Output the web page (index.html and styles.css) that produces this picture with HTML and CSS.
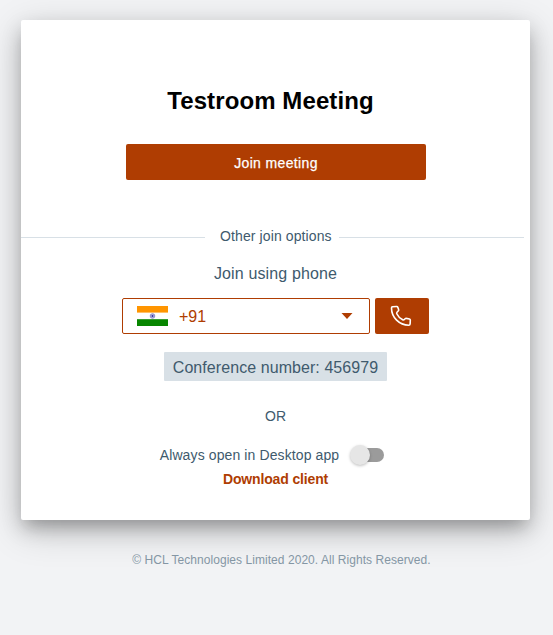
FILE: index.html
```html
<!DOCTYPE html>
<html lang="en">
<head>
<meta charset="utf-8">
<title>Testroom Meeting</title>
<link rel="stylesheet" href="styles.css">
</head>
<body>
<main class="card">
  <h1 class="title"><span>Testroom Meeting</span></h1>
  <button class="join">Join meeting</button>
  <div class="divider"><span class="divider-label">Other join options</span></div>
  <p class="subtitle"><span>Join using phone</span></p>
  <div class="phone">
    <div class="country">
      <svg class="flag" viewBox="0 0 31 20" width="31" height="20">
        <path fill="#fff" d="M0 0h31v20H0z"/>
        <path fill="#ff9500" d="M0 0h31v6.6H0z"/>
        <path fill="#078600" d="M0 13.2h31V20H0z"/>
        <circle cx="15.5" cy="10" r="2.3" fill="#b5b5df" stroke="#7c7cc4" stroke-width=".8"/>
        <circle cx="15.5" cy="10" r=".9" fill="#30309c"/>
      </svg>
      <span class="code">+91</span>
      <svg class="caret" viewBox="0 0 12 6" width="12" height="6"><path fill="#af3d02" d="M.5 0h11L6 6z"/></svg>
    </div>
    <button class="call" aria-label="Call">
      <svg viewBox="0 0 22 22" width="22" height="22"><path fill="none" stroke="#fff" stroke-width="1.6" stroke-linejoin="round" d="M2.5 1.8 6.5 1.5Q7.6 1.4 7.9 2.4L8.6 4.6Q8.8 5.4 8.2 6L7 7.2Q6.4 7.9 6.8 8.8C8 11.5 10.2 13.5 12.7 14.8Q13.5 15.2 14.2 14.7L15.1 13.8Q15.7 13.2 16.5 13.4L19.4 14Q20.4 14.3 20.3 15.2L20.1 19Q20 20.2 18.8 20.2C9.3 20.2 1.5 12.5 1.5 3Q1.5 1.9 2.5 1.8Z"/></svg>
    </button>
  </div>
  <p class="conference"><span>Conference number: 456979</span></p>
  <p class="or">OR</p>
  <div class="desktop">
    <span class="desktop-label">Always open in Desktop app</span>
    <span class="switch"><span class="knob"></span></span>
  </div>
  <a class="download">Download client</a>
</main>
<footer class="footer"><span>© HCL Technologies Limited 2020. All Rights Reserved.</span></footer>
</body>
</html>
```
FILE: styles.css
```css
* { box-sizing: border-box; }
body {
  margin: 0;
  padding: 20px 23px 0 21px;
  height: 635px;
  overflow: hidden;
  background: #f2f3f5;
  color: #405a6d;
  font: 14px/20px "Liberation Sans", Arial, sans-serif;
  white-space: nowrap;
}
h1, p { margin: 0; }
button { border: 0; padding: 0; font: inherit; color: #fff; background: #af3d02; border-radius: 2px; }
svg { display: block; }
.card {
  display: flex;
  flex-direction: column;
  align-items: center;
  height: 500px;
  padding-top: 66px;
  background: #fff;
  border-radius: 2px;
  box-shadow: 0 10px 14px -6px rgba(0, 0, 0, .15), 0 10px 38px 0 rgba(0, 0, 0, .2), 0 9px 20px 0 rgba(0, 0, 0, .17);
}
.title {
  margin-right: 10px;
  color: #000;
  font-size: 24px;
  line-height: 30px;
  letter-spacing: .1px;
}
.join {
  width: 300px;
  height: 36px;
  margin: 28px 0 0 1px;
  padding-top: 1px;
  -webkit-text-stroke: .25px;
  letter-spacing: .36px;
}
.divider {
  display: flex;
  align-items: center;
  align-self: stretch;
  height: 20px;
  margin: 47px 6px 0 0;
}
.divider::before, .divider::after {
  content: "";
  height: 1px;
  margin-top: 1px;
  background: #d8e0e6;
}
.divider::before { width: 184px; }
.divider::after { flex: 1; }
.divider-label { width: 134px; padding: 0 0 2px 15px; letter-spacing: .11px; }
.subtitle { margin-top: 16px; font-size: 16px; line-height: 22px; letter-spacing: .13px; }
.phone { display: flex; gap: 4.5px; margin: 13px .5px 0 0; }
.country {
  display: flex;
  align-items: center;
  width: 248px;
  height: 36px;
  padding: 0 16px 0 14px;
  border: 1px solid #af3d02;
  border-radius: 2px;
  color: #af3d02;
  font-size: 16px;
}
.code { margin-left: 11px; padding-top: 2px; }
.caret { margin-left: auto; }
.call { display: flex; align-items: center; justify-content: center; width: 54px; height: 36px; padding-right: 2px; }
.conference {
  width: 223px;
  height: 29px;
  margin-top: 18px;
  border-radius: 1px;
  background: #d8e0e6;
  font-size: 16px;
  line-height: 31px;
  letter-spacing: .07px;
  text-align: center;
}
.or { margin-top: 25px; }
.desktop { display: flex; align-items: center; margin: 19px 7px 0 0; height: 20px; gap: 13px; }
.desktop-label { letter-spacing: .11px; }
.switch { position: relative; width: 32px; height: 14px; border-radius: 7px; background: #9b9b9b; }
.knob {
  position: absolute;
  left: -2px;
  top: -3px;
  width: 20px;
  height: 20px;
  border-radius: 50%;
  background: #e6e6e6;
  box-shadow: 0 1px 3px rgba(0, 0, 0, .25);
}
.download { margin-top: 4px; color: #af3d02; font-weight: bold; letter-spacing: -.15px; }
.footer {
  margin: 32px 0 0 12px;
  text-align: center;
  color: #8496a4;
  font-size: 12px;
  line-height: 16px;
  letter-spacing: .05px;
}
```
